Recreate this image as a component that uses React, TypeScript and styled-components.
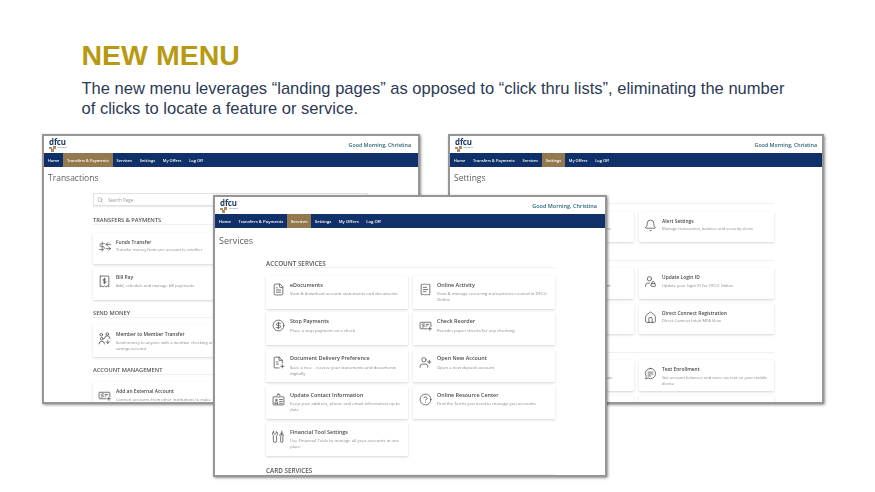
import React from "react";
import styled, { createGlobalStyle } from "styled-components";
import { Bell, CircleDollarSign, CircleHelp, FileText, House, ReceiptText, Search, UserLock, UserPlus } from "lucide-react";

const Global = createGlobalStyle`
  html, body { margin: 0; padding: 0; background: #fff; }
  body { width: 875px; height: 492px; overflow: hidden; }
`;

const Page = styled.div`
  position: relative;
  width: 875px;
  height: 492px;
  overflow: hidden;
  background: #fff;
  padding: 39px 0 0 81.5px;
  box-sizing: border-box;
  font-family: "Liberation Sans", Arial, sans-serif;
`;
const Heading = styled.h1`
  margin: 0;
  font-size: 28.5px;
  line-height: 32px;
  font-weight: 700;
  color: #b89a12;
`;
const Lead = styled.p`
  margin: 8px 0 0;
  width: 720px;
  font-size: 16.55px;
  line-height: 19.5px;
  color: #2b3a55;
`;

const Win = styled.section<{ $left: number; $top: number; $width: number; $height: number; $layer: number }>`
  position: absolute;
  left: ${(p) => p.$left}px;
  top: ${(p) => p.$top}px;
  width: ${(p) => p.$width}px;
  height: ${(p) => p.$height}px;
  z-index: ${(p) => p.$layer};
  box-sizing: border-box;
  overflow: hidden;
  background: #fff;
  border: 2px solid #969696;
  box-shadow: 0.5px 0.5px 3px rgba(0, 0, 0, 0.6);
  font-family: "Open Sans", sans-serif;
  filter: blur(0.3px);
`;
const WinBody = styled.div`
  display: flex;
  flex-direction: column;
`;
const Header = styled.header<{ $right: number }>`
  height: 17px;
  display: flex;
  align-items: center;
  justify-content: space-between;
  padding: 0 ${(p) => p.$right}px 0 5px;
`;
const Logo = styled.div`
  position: relative;
  width: 30px;
  height: 14px;
`;
const LogoWord = styled.span`
  display: block;
  font-size: 7.9px;
  line-height: 8px;
  font-weight: 700;
  letter-spacing: -0.1px;
  color: #1d3a63;
`;
const LogoSub = styled.span`
  position: absolute;
  left: 9px;
  top: 8.5px;
  font-size: 1.8px;
  line-height: 3px;
  color: #1d3a63;
  white-space: nowrap;
`;
const LogoMark = styled.svg`
  position: absolute;
  left: -1px;
  top: 8px;
  width: 9px;
  height: 6px;
`;
const Greeting = styled.span<{ $size: number }>`
  font-size: ${(p) => p.$size}px;
  font-weight: 600;
  color: #2a6472;
  white-space: nowrap;
`;
const Nav = styled.nav`
  height: 14px;
  display: flex;
  background: #0f3068;
`;
const NavItem = styled.span<{ $active?: boolean; $size: number; $pad: number }>`
  display: flex;
  align-items: center;
  padding: 0 ${(p) => p.$pad}px;
  font-size: ${(p) => p.$size}px;
  font-weight: 600;
  color: #fff;
  white-space: nowrap;
  background: ${(p) => (p.$active ? "#94794f" : "transparent")};
`;
const PageTitle = styled.h2<{ $size: number; $top: number; $bottom: number }>`
  margin: ${(p) => p.$top}px 0 ${(p) => p.$bottom}px 4px;
  font-size: ${(p) => p.$size}px;
  line-height: 12px;
  font-weight: 400;
  color: #606060;
`;
const Content = styled.div<{ $indent: number; $col: number; $gap: number }>`
  margin-left: ${(p) => p.$indent}px;
  width: ${(p) => p.$col * 2 + 5}px;
  display: flex;
  flex-direction: column;
  gap: ${(p) => p.$gap}px;
`;
const SearchBox = styled.div`
  height: 13px;
  box-sizing: border-box;
  margin-bottom: 1px;
  display: flex;
  align-items: center;
  gap: 4px;
  padding-left: 3px;
  border: 1px solid #e2e2e2;
  box-shadow: 0 1px 1px rgba(0, 0, 0, 0.08);
  font-size: 4.4px;
  color: #999;
`;
const Group = styled.div`
  display: flex;
  flex-direction: column;
`;
const GroupTitle = styled.h3<{ $size: number }>`
  margin: 0 0 7.5px;
  height: 11px;
  box-sizing: border-box;
  border-bottom: 1px solid #f0f0f0;
  font-size: ${(p) => p.$size}px;
  line-height: 13px;
  font-weight: 600;
  color: #555;
  white-space: nowrap;
`;
const Grid = styled.div<{ $col: number; $row: number; $gap: number }>`
  display: grid;
  grid-template-columns: ${(p) => p.$col}px ${(p) => p.$col}px;
  grid-auto-rows: ${(p) => p.$row}px;
  column-gap: 5px;
  row-gap: ${(p) => p.$gap}px;
`;
const Card = styled.article<{ $column?: number }>`
  ${(p) => (p.$column ? `grid-column: ${p.$column};` : "")}
  display: flex;
  align-items: flex-start;
  box-sizing: border-box;
  padding-top: 6px;
  background: #fff;
  border-radius: 1px;
  box-shadow: 0 1px 2.5px rgba(0, 0, 0, 0.17);
`;
const CardIcon = styled.span<{ $width: number }>`
  flex: 0 0 ${(p) => p.$width}px;
  height: 15px;
  display: flex;
  align-items: center;
  justify-content: center;
  color: #4a4a4a;
  svg { width: 13px; height: 13px; stroke-width: 1.4; }
`;
const CardText = styled.div`
  flex: 1;
  padding-right: 5px;
  min-width: 0;
`;
const CardTitle = styled.div<{ $size: number }>`
  font-size: ${(p) => p.$size}px;
  line-height: 7px;
  font-weight: 600;
  color: #4a4a4a;
  white-space: nowrap;
`;
const CardDesc = styled.div<{ $size: number }>`
  margin-top: 1.5px;
  font-size: ${(p) => p.$size}px;
  line-height: 6px;
  color: #8a8a8a;
`;

const Svg = ({ children }: { children: React.ReactNode }) => (
  <svg viewBox="0 0 24 24" fill="none" stroke="currentColor" strokeLinecap="round" strokeLinejoin="round">
    {children}
  </svg>
);
const TransferIcon = () => (
  <Svg>
    <g transform="translate(0 2) scale(.85)">
      <path d="M9 2v20M14 5.5H7a3.3 3.3 0 0 0 0 6.5h4a3.3 3.3 0 0 1 0 6.500H3" />
    </g>
    <path d="M15 8h8M18 5l-3 3 3 3M15 16h8M20 13l3 3-3 3" />
  </Svg>
);
const BillIcon = () => (
  <Svg>
    <path d="M5 2h14a1 1 0 0 1 1 1v19l-3-2-2.500 2-2.500-2-2.500 2L7 20l-3 2V3a1 1 0 0 1 1-1z" />
    <path d="M14 7.500h-3a1.700 1.700 0 0 0 0 3.500h2a1.700 1.700 0 0 1 0 3.500h-3M12 6v10" />
  </Svg>
);
const MembersIcon = () => (
  <Svg>
    <circle cx="6" cy="5" r="2.500" />
    <circle cx="17" cy="4" r="2.500" />
    <path d="M12 12a5 5 0 0 1 10 0M15 18l3 3 3-3M18 21v-5" />
    <circle cx="7" cy="12.500" r="2.500" />
    <path d="M2 22a5 5 0 0 1 10 0" />
  </Svg>
);
const CheckIcon = () => (
  <Svg>
    <path d="M15 18H3a1 1 0 0 1-1-1V7a1 1 0 0 1 1-1h18a1 1 0 0 1 1 1v7" />
    <path d="M10 9H7.500a1.300 1.300 0 0 0 0 2.800h1a1.300 1.300 0 0 1 0 2.800H6M13 10h5M13 13h2M20 15v6M17 18h6" />
  </Svg>
);
const ContactIcon = () => (
  <Svg>
    <path d="M8 7H3a1 1 0 0 0-1 1v13a1 1 0 0 0 1 1h18a1 1 0 0 0 1-1V8a1 1 0 0 0-1-1h-5" />
    <rect x="9.500" y="2" width="5" height="6" rx="2" />
    <circle cx="8" cy="13" r="1.500" />
    <path d="M5 19a3 3 0 0 1 6 0zM14 12h5M14 15.500h5M14 19h5" />
  </Svg>
);
const ToolsIcon = () => (
  <Svg>
    <path d="M3 3v3l2.500 2L8 6V3c2 1 3 3 2.500 5L8.500 10v10a2.500 2.500 0 0 1-6 0V10L.8 8C.5 6 1.200 4 3 3z" />
    <path d="M18 2v7M15 9h6v2l-1 1v9a2 2 0 0 1-4 0v-9l-1-1zM16 6h4" />
  </Svg>
);
const MessageIcon = () => (
  <Svg>
    <path d="M12 2.500a9.500 9.500 0 1 1-4.300 18L3 22l1.300-4.500A9.500 9.500 0 0 1 12 2.500z" />
    <path d="M7.500 9.500h9M7.500 13h9M7.500 16.500h5" />
  </Svg>
);
const DocPlusIcon = () => (
  <Svg>
    <path d="M13 22H5a1 1 0 0 1-1-1V3a1 1 0 0 1 1-1h8l6 6v5M13 2v6h6M8 11h3M8 15h4M19 16v6M16 19h6" />
  </Svg>
);

type Item = { icon?: React.ReactNode; title: string; desc: string; column?: number };

const LogoBlock = () => (
  <Logo>
    <LogoWord>dfcu</LogoWord>
    <LogoMark viewBox="0 0 9 6">
      <path d="M1 1h3v2H1zM5 0h3v3H5zM3 3h3v3H3z" fill="#a98f63" />
    </LogoMark>
    <LogoSub>FINANCIAL</LogoSub>
  </Logo>
);

const navLabels = ["Home", "Transfers & Payments", "Services", "Settings", "My Offers", "Log Off"];

type WindowProps = {
  box: { left: number; top: number; width: number; height: number; layer: number };
  title: string;
  active: string;
  greetSize: number;
  greetRight: number;
  navSize: number;
  navPad: number;
  titleSize: number;
  titleTop: number;
  titleBottom: number;
  indent: number;
  col: number;
  row: number;
  gap: number;
  groupGap: number;
  iconWidth: number;
  headSize: number;
  cardTitle: number;
  cardDesc: number;
  search?: boolean;
  groups: { title: string; items: Item[] }[];
};

const ScreenWindow = (w: WindowProps) => (
  <Win $left={w.box.left} $top={w.box.top} $width={w.box.width} $height={w.box.height} $layer={w.box.layer}>
    <WinBody>
      <Header $right={w.greetRight}>
        <LogoBlock />
        <Greeting $size={w.greetSize}>Good Morning, Christina</Greeting>
      </Header>
      <Nav>
        {navLabels.map((n) => (
          <NavItem key={n} $active={n === w.active} $size={w.navSize} $pad={w.navPad}>
            {n}
          </NavItem>
        ))}
      </Nav>
      <PageTitle $size={w.titleSize} $top={w.titleTop} $bottom={w.titleBottom}>
        {w.title}
      </PageTitle>
      <Content $indent={w.indent} $col={w.col} $gap={w.groupGap}>
        {w.search && (
          <SearchBox>
            <Search size={6} color="#888" />
            <span>&nbsp;Search Page</span>
          </SearchBox>
        )}
        {w.groups.map((g) => (
          <Group key={g.title}>
            <GroupTitle $size={w.headSize}>{g.title}</GroupTitle>
            <Grid $col={w.col} $row={w.row} $gap={w.gap}>
              {g.items.map((c, i) => (
                <Card key={i} $column={c.column}>
                  <CardIcon $width={w.iconWidth}>{c.icon}</CardIcon>
                  <CardText>
                    <CardTitle $size={w.cardTitle}>{c.title}</CardTitle>
                    <CardDesc $size={w.cardDesc}>{c.desc}</CardDesc>
                  </CardText>
                </Card>
              ))}
            </Grid>
          </Group>
        ))}
      </Content>
    </WinBody>
  </Win>
);

const transactions: WindowProps["groups"] = [
  {
    title: "TRANSFERS & PAYMENTS",
    items: [
      { icon: <TransferIcon />, title: "Funds Transfer", desc: "Transfer money from one account to another", column: 1 },
      { icon: <BillIcon />, title: "Bill Pay", desc: "Add, schedule and manage bill payments", column: 1 },
    ],
  },
  {
    title: "SEND MONEY",
    items: [
      { icon: <MembersIcon />, title: "Member to Member Transfer", desc: "Send money to anyone with a member checking or savings account", column: 1 },
    ],
  },
  {
    title: "ACCOUNT MANAGEMENT",
    items: [
      { icon: <CheckIcon />, title: "Add an External Account", desc: "Connect accounts from other institutions to make", column: 1 },
    ],
  },
];

const settings: WindowProps["groups"] = [
  {
    title: "SECURITY",
    items: [
      { icon: <UserLock />, title: "Update Password", desc: "Change the password you use for DFCU Online" },
      { icon: <Bell />, title: "Alert Settings", desc: "Manage transaction, balance and security alerts" },
    ],
  },
  {
    title: "PROFILE",
    items: [
      { icon: <ContactIcon />, title: "Update Contact", desc: "Keep your address and phone number current" },
      { icon: <UserLock />, title: "Update Login ID", desc: "Update your login ID for DFCU Online" },
      { icon: <FileText />, title: "Statements", desc: "View and manage statement preferences on" },
      { icon: <House />, title: "Direct Connect Registration", desc: "Direct Connect Intuit MFA View" },
    ],
  },
  {
    title: "PREFERENCES",
    items: [
      { icon: <FileText />, title: "Text Preferences", desc: "Manage the text alerts that keep you up to date" },
      { icon: <MessageIcon />, title: "Text Enrollment", desc: "Get account balances and more via text on your mobile device" },
      { title: "", desc: "" },
      { title: "", desc: "" },
    ],
  },
];

const services: WindowProps["groups"] = [
  {
    title: "ACCOUNT SERVICES",
    items: [
      { icon: <FileText />, title: "eDocuments", desc: "View & download account statements and documents" },
      { icon: <ReceiptText />, title: "Online Activity", desc: "View & manage recurring transactions created in DFCU Online" },
      { icon: <CircleDollarSign />, title: "Stop Payments", desc: "Place a stop payment on a check" },
      { icon: <CheckIcon />, title: "Check Reorder", desc: "Reorder paper checks for any checking" },
      { icon: <DocPlusIcon />, title: "Document Delivery Preference", desc: "Save a tree - receive your statements and documents digitally" },
      { icon: <UserPlus />, title: "Open New Account", desc: "Open a new deposit account" },
      { icon: <ContactIcon />, title: "Update Contact Information", desc: "Keep your address, phone and email information up to date" },
      { icon: <CircleHelp />, title: "Online Resource Center", desc: "Find the forms you need to manage you accounts" },
      { icon: <ToolsIcon />, title: "Financial Tool Settings", desc: "Use Financial Tools to manage all your accounts in one place" },
    ],
  },
  { title: "CARD SERVICES", items: [] },
];

export default function App() {
  return (
    <Page>
      <Global />
      <Heading>NEW MENU</Heading>
      <Lead>
        The new menu leverages “landing pages” as opposed to “click thru lists”, eliminating the number of clicks to locate a feature or service.
      </Lead>
      <ScreenWindow
        box={{ left: 42, top: 134, width: 378, height: 270, layer: 1 }}
        title="Transactions"
        active="Transfers & Payments"
        greetSize={5.3}
        greetRight={7}
        navSize={3.95}
        navPad={3.9}
        titleSize={8.5}
        titleTop={5}
        titleBottom={9}
        indent={49}
        col={135}
        row={31.5}
        gap={4}
        groupGap={7}
        iconWidth={23}
        headSize={5.7}
        cardTitle={4.9}
        cardDesc={4.1}
        search
        groups={transactions}
      />
      <ScreenWindow
        box={{ left: 448, top: 134, width: 376, height: 270, layer: 2 }}
        title="Settings"
        active="Settings"
        greetSize={5.3}
        greetRight={5}
        navSize={3.95}
        navPad={3.9}
        titleSize={8.5}
        titleTop={5}
        titleBottom={9}
        indent={49}
        col={135}
        row={30.5}
        gap={5}
        groupGap={7.5}
        iconWidth={23}
        headSize={5.7}
        cardTitle={4.9}
        cardDesc={4.1}
        groups={settings}
      />
      <ScreenWindow
        box={{ left: 213, top: 195, width: 394, height: 282, layer: 3 }}
        title="Services"
        active="Services"
        greetSize={5.5}
        greetRight={8}
        navSize={4.25}
        navPad={3.7}
        titleSize={9}
        titleTop={7}
        titleBottom={10}
        indent={51}
        col={142}
        row={33}
        gap={3.75}
        groupGap={8}
        iconWidth={24}
        headSize={6.3}
        cardTitle={5.4}
        cardDesc={4.3}
        groups={services}
      />
    </Page>
  );
}
